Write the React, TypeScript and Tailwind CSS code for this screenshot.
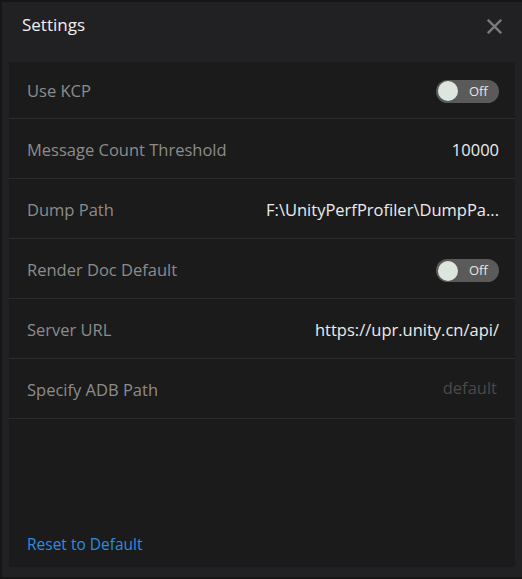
import React from "react";

function Toggle() {
  return (
    <div className="flex h-[23px] w-[63px] items-center rounded-full bg-[#5a5a5a] pl-[2px]">
      <div className="h-[20px] w-[20px] rounded-full bg-[#dde6de]" />
      <span className="ml-[11px] text-[13px] leading-none text-[#e6e6e6]">Off</span>
    </div>
  );
}

function Row({ label, children, first }: { label: string; children: React.ReactNode; first?: boolean }) {
  return (
    <div
      className={`flex items-center justify-between border-b border-[#2b2b2c] pl-[18px] pr-[16px] ${
        first ? "h-[57px] pt-[2px]" : "h-[60px] pt-[4px]"
      }`}
    >
      <span className="text-[16.5px] text-[#8c8c8c]">{label}</span>
      {children}
    </div>
  );
}

export default function App() {
  return (
    <div
      className="flex h-[579px] w-[522px] flex-col border-t-2 border-l-2 border-[#161617] bg-[#212123]"
      style={{ fontFamily: '"Open Sans", "Noto Sans", sans-serif' }}
    >
      <div className="flex h-[60px] items-start justify-between pl-[20px] pr-[20px] pt-[10px]">
        <span className="text-[17px] text-[#f0f0f0]">Settings</span>
        <svg width="15" height="15" viewBox="0 0 14 14" className="mt-[7px]">
          <path d="M1.5 1.5 L12.5 12.5 M12.5 1.5 L1.5 12.5" stroke="#7a7a7a" strokeWidth="2.2" strokeLinecap="square" />
        </svg>
      </div>
      <div className="mx-[7px] flex h-[505px] w-[506px] flex-col bg-[#1b1b1c]">
        <Row label="Use KCP" first>
          <Toggle />
        </Row>
        <Row label="Message Count Threshold">
          <span className="text-[16.5px] text-[#ececec]">10000</span>
        </Row>
        <Row label="Dump Path">
          <span className="text-[16.5px] text-[#ececec]">F:\UnityPerfProfiler\DumpPa...</span>
        </Row>
        <Row label="Render Doc Default">
          <Toggle />
        </Row>
        <Row label="Server URL">
          <span className="text-[16.5px] text-[#ececec]">https://upr.unity.cn/api/</span>
        </Row>
        <Row label="Specify ADB Path">
          <span className="mb-[4px] pr-[2px] text-[16.5px] text-[#4a4a4b]">default</span>
        </Row>
        <div className="flex-1" />
        <div className="pb-[11px] pl-[18px]">
          <span className="text-[15.5px] text-[#2a8ee0]">Reset to Default</span>
        </div>
      </div>
      <div className="flex-1" />
      <div className="h-[2px] bg-[#161617]" />
    </div>
  );
}
